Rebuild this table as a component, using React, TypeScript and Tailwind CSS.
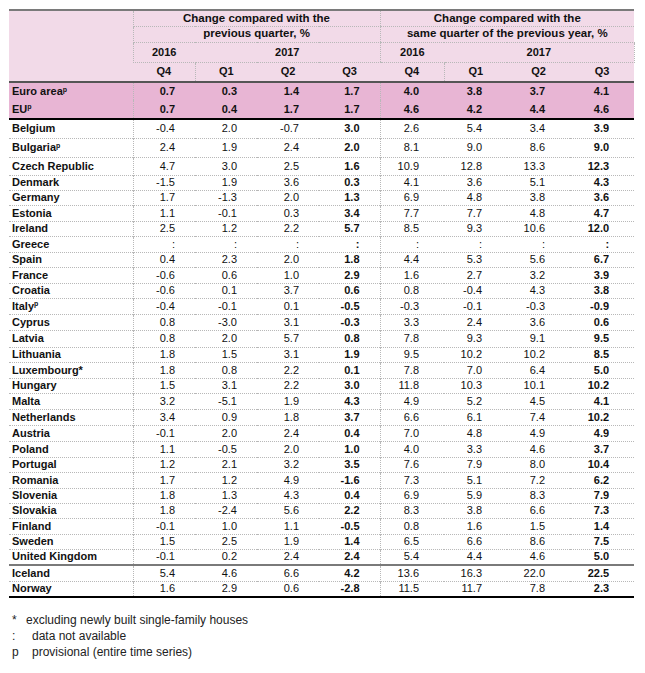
const rows: { label: string; sup?: string; h: string; v: string[]; line?: string }[] = [
  { label: 'Belgium', h: 'h-[19px]', v: ['-0.4', '2.0', '-0.7', '3.0', '2.6', '5.4', '3.4', '3.9'] },
  { label: 'Bulgaria', sup: 'p', h: 'h-[19px]', v: ['2.4', '1.9', '2.4', '2.0', '8.1', '9.0', '8.6', '9.0'] },
  { label: 'Czech Republic', h: 'h-[18px]', v: ['4.7', '3.0', '2.5', '1.6', '10.9', '12.8', '13.3', '12.3'] },
  { label: 'Denmark', h: 'h-[15px]', v: ['-1.5', '1.9', '3.6', '0.3', '4.1', '3.6', '5.1', '4.3'] },
  { label: 'Germany', h: 'h-[15px]', v: ['1.7', '-1.3', '2.0', '1.3', '6.9', '4.8', '3.8', '3.6'] },
  { label: 'Estonia', h: 'h-[16px]', v: ['1.1', '-0.1', '0.3', '3.4', '7.7', '7.7', '4.8', '4.7'] },
  { label: 'Ireland', h: 'h-[15px]', v: ['2.5', '1.2', '2.2', '5.7', '8.5', '9.3', '10.6', '12.0'] },
  { label: 'Greece', h: 'h-[16px]', v: [':', ':', ':', ':', ':', ':', ':', ':'] },
  { label: 'Spain', h: 'h-[15px]', v: ['0.4', '2.3', '2.0', '1.8', '4.4', '5.3', '5.6', '6.7'] },
  { label: 'France', h: 'h-[16px]', v: ['-0.6', '0.6', '1.0', '2.9', '1.6', '2.7', '3.2', '3.9'] },
  { label: 'Croatia', h: 'h-[15px]', v: ['-0.6', '0.1', '3.7', '0.6', '0.8', '-0.4', '4.3', '3.8'] },
  { label: 'Italy', sup: 'p', h: 'h-[16px]', v: ['-0.4', '-0.1', '0.1', '-0.5', '-0.3', '-0.1', '-0.3', '-0.9'] },
  { label: 'Cyprus', h: 'h-[16px]', v: ['0.8', '-3.0', '3.1', '-0.3', '3.3', '2.4', '3.6', '0.6'] },
  { label: 'Latvia', h: 'h-[17px]', v: ['0.8', '2.0', '5.7', '0.8', '7.8', '9.3', '9.1', '9.5'] },
  { label: 'Lithuania', h: 'h-[15px]', v: ['1.8', '1.5', '3.1', '1.9', '9.5', '10.2', '10.2', '8.5'] },
  { label: 'Luxembourg*', h: 'h-[16px]', v: ['1.8', '0.8', '2.2', '0.1', '7.8', '7.0', '6.4', '5.0'] },
  { label: 'Hungary', h: 'h-[15px]', v: ['1.5', '3.1', '2.2', '3.0', '11.8', '10.3', '10.1', '10.2'] },
  { label: 'Malta', h: 'h-[16px]', v: ['3.2', '-5.1', '1.9', '4.3', '4.9', '5.2', '4.5', '4.1'] },
  { label: 'Netherlands', h: 'h-[16px]', v: ['3.4', '0.9', '1.8', '3.7', '6.6', '6.1', '7.4', '10.2'] },
  { label: 'Austria', h: 'h-[16px]', v: ['-0.1', '2.0', '2.4', '0.4', '7.0', '4.8', '4.9', '4.9'] },
  { label: 'Poland', h: 'h-[16px]', v: ['1.1', '-0.5', '2.0', '1.0', '4.0', '3.3', '4.6', '3.7'] },
  { label: 'Portugal', h: 'h-[15px]', v: ['1.2', '2.1', '3.2', '3.5', '7.6', '7.9', '8.0', '10.4'] },
  { label: 'Romania', h: 'h-[16px]', v: ['1.7', '1.2', '4.9', '-1.6', '7.3', '5.1', '7.2', '6.2'] },
  { label: 'Slovenia', h: 'h-[15px]', v: ['1.8', '1.3', '4.3', '0.4', '6.9', '5.9', '8.3', '7.9'] },
  { label: 'Slovakia', h: 'h-[15px]', v: ['1.8', '-2.4', '5.6', '2.2', '8.3', '3.8', '6.6', '7.3'] },
  { label: 'Finland', h: 'h-[16px]', v: ['-0.1', '1.0', '1.1', '-0.5', '0.8', '1.6', '1.5', '1.4'] },
  { label: 'Sweden', h: 'h-[15px]', v: ['1.5', '2.5', '1.9', '1.4', '6.5', '6.6', '8.6', '7.5'] },
  { label: 'United Kingdom', h: 'h-[16px]', line: 'border-b-2 border-solid border-b-[#7a7a7a]', v: ['-0.1', '0.2', '2.4', '2.4', '5.4', '4.4', '4.6', '5.0'] },
  { label: 'Iceland', h: 'h-[16px]', v: ['5.4', '4.6', '6.6', '4.2', '13.6', '16.3', '22.0', '22.5'] },
  { label: 'Norway', h: 'h-[16px]', line: 'border-b-2 border-solid border-b-black', v: ['1.6', '2.9', '0.6', '-2.8', '11.5', '11.7', '7.8', '2.3'] },
]

const totals = [
  { label: 'Euro area', h: 'h-[18px]', v: ['0.7', '0.3', '1.4', '1.7', '4.0', '3.8', '3.7', '4.1'] },
  { label: 'EU', h: 'h-[19px]', v: ['0.7', '0.4', '1.7', '1.7', '4.6', '4.2', '4.4', '4.6'] },
]

const dot = 'border-dotted border-[#b8b8b8]'

const Sup = ({ t }: { t: string }) => <sup className="text-[7px] font-bold">{t}</sup>

export default function App() {
  return (
    <main className="min-h-screen bg-white pt-[9px] pl-[9px] font-['Liberation_Sans',Arial,sans-serif] text-[#111]">
      <table className="w-[625px] table-fixed border-collapse text-[11px] leading-none">
        <colgroup>
          <col className="w-[124px]" />
          <col className="w-[62px]" />
          <col className="w-[62px]" />
          <col className="w-[62px]" />
          <col className="w-[61px]" />
          <col className="w-[64px]" />
          <col className="w-[63px]" />
          <col className="w-[63px]" />
          <col className="w-[64px]" />
        </colgroup>
        <thead className="bg-[#f2dae8] font-bold">
          <tr className="h-[16px] border-t-2 border-solid border-t-[#7a7a7a] text-[11.5px]">
            <td rowSpan={3} />
            <td colSpan={4} className={`border-l border-b text-center ${dot}`}>Change compared with the</td>
            <td colSpan={4} className={`border-l border-b text-center ${dot}`}>Change compared with the</td>
          </tr>
          <tr className="h-[16px] text-[11.5px]">
            <td colSpan={4} className={`border-l border-b text-center ${dot}`}>previous quarter, %</td>
            <td colSpan={4} className={`border-l border-b text-center ${dot}`}>same quarter of the previous year, %</td>
          </tr>
          <tr className="h-[20px]">
            <td className={`border-l border-b text-center ${dot}`}>2016</td>
            <td colSpan={3} className={`border-b text-center ${dot}`}>2017</td>
            <td className={`border-l border-b text-center ${dot}`}>2016</td>
            <td colSpan={3} className={`border-b border-r text-center ${dot}`}>2017</td>
          </tr>
          <tr className="h-[20px] border-b-2 border-solid border-b-[#555]">
            <td />
            <td className={`border-r text-center ${dot}`}>Q4</td>
            <td className="text-center">Q1</td>
            <td className="text-center">Q2</td>
            <td className="text-center">Q3</td>
            <td className={`border-r text-center ${dot}`}>Q4</td>
            <td className="text-center">Q1</td>
            <td className="text-center">Q2</td>
            <td className="text-center">Q3</td>
          </tr>
        </thead>
        <tbody>
          {totals.map((r, i) => (
            <tr
              key={r.label}
              className={`${r.h} bg-[#e8b5d4] font-bold ${i === 1 ? 'border-b-2 border-solid border-b-black' : ''}`}
            >
              <td className={`border-r pl-[3px] ${dot}`}>
                {r.label}
                <Sup t="p" />
              </td>
              {r.v.map((x, j) => (
                <td
                  key={j}
                  className={`text-right ${j < 4 ? 'pr-5' : 'pr-[25px]'} ${j === 4 ? `border-l ${dot}` : ''}`}
                >
                  {x}
                </td>
              ))}
            </tr>
          ))}
          {rows.map((r) => (
            <tr key={r.label} className={`${r.h} ${r.line ?? `border-b ${dot}`}`}>
              <td className={`border-r pl-[3px] font-bold ${dot}`}>
                {r.label}
                {r.sup && <Sup t={r.sup} />}
              </td>
              {r.v.map((x, j) => (
                <td
                  key={j}
                  className={`text-right ${j < 4 ? 'pr-5' : 'pr-[25px]'} ${j === 3 || j === 7 ? 'font-bold' : ''} ${j === 4 ? `border-l ${dot}` : ''}`}
                >
                  {x}
                </td>
              ))}
            </tr>
          ))}
        </tbody>
      </table>

      <div className="mt-[14px] pl-[3px] text-[12px] leading-[16px] text-[#222]">
        <div className="flex">
          <span className="w-[14px]">*</span>
          <span>excluding newly built single-family houses</span>
        </div>
        <div className="flex">
          <span className="w-[20px]">:</span>
          <span>data not available</span>
        </div>
        <div className="flex">
          <span className="w-[20px]">p</span>
          <span>provisional (entire time series)</span>
        </div>
      </div>
    </main>
  )
}
